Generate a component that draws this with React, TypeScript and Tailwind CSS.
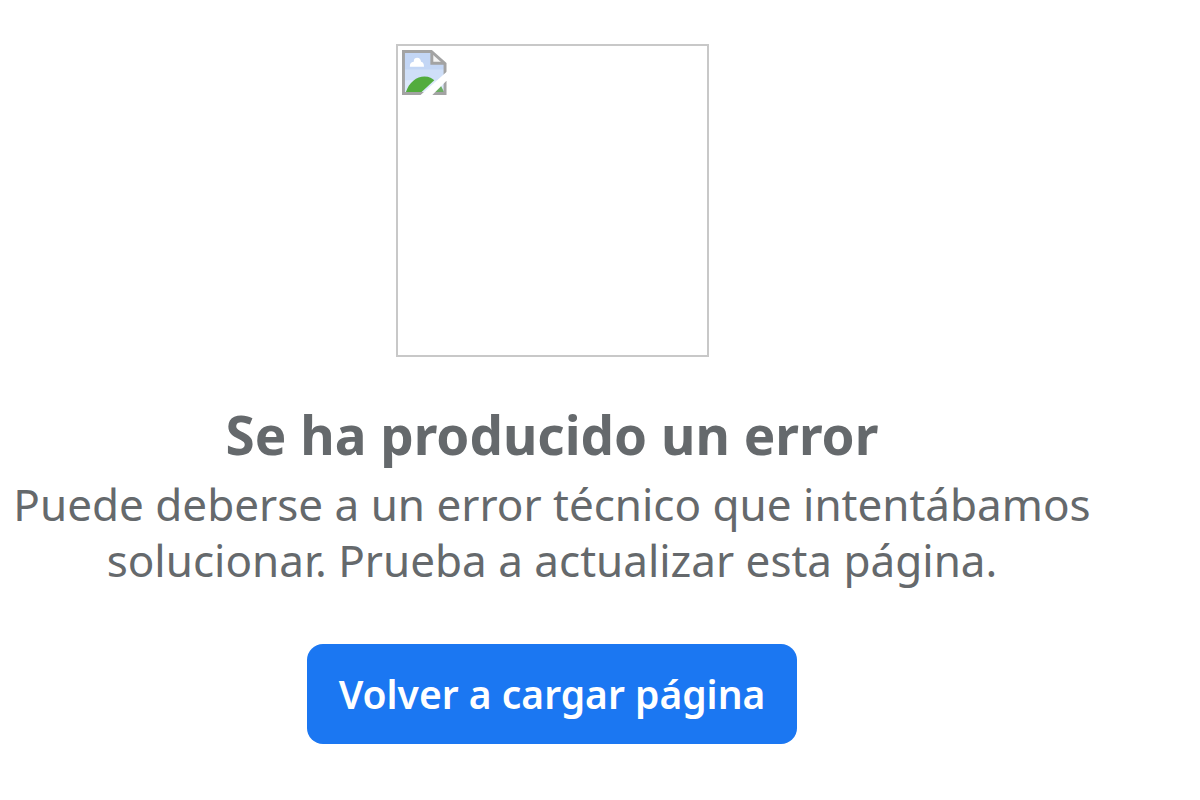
function BrokenImageIcon() {
  return (
    <svg className="h-[45px] w-[45px]" viewBox="0 0 46 46" fill="none" aria-hidden="true">
      <path d="M1.5 1.5H30L44 14V44.5H1.5Z" fill="#c3d6f5" />
      <path d="M3 20H43V43H3Z" fill="#cfdff8" />
      <path d="M3 31H43V43H3Z" fill="#dce8fb" />
      <path d="M8 17C8 14 9 12.500 12 12C12 9 13.500 8 15.500 8C18 8 19 9.500 19.500 12C21.500 12.500 22.500 14 22.500 17Z" fill="#fff" />
      <path d="M4 43C7 33 15 27 23 27C28 27 31 29 33 31L20 43Z" fill="#52ac3d" />
      <path d="M31 43L39 35L43 43Z" fill="#6cae63" />
      <path d="M30 1.500V14H44Z" fill="#f4f4f4" />
      <path d="M1.500 1.500H30L44 14V44.500H1.500Z" stroke="#a3a3a3" strokeWidth="3" />
      <path d="M30.500 2V13.500H43" stroke="#a3a3a3" strokeWidth="3" />
      <path d="M46 22V31L31 46H19Z" fill="#fff" />
    </svg>
  )
}

export default function App() {
  const handleReload = () => {
    window.location.reload()
  }

  return (
    <main className="min-h-screen bg-white pt-11 pr-24 pb-14 font-['Noto_Sans',sans-serif] text-[#65696c]">
      <div className="flex flex-col items-center text-center">
        <div className="h-[313px] w-[313px] border-2 border-[#c8c8c8] p-1">
          <BrokenImageIcon />
        </div>

        <h1 className="mt-11 text-[53px] leading-[67px] font-bold">Se ha producido un error</h1>
        <p className="mt-2 max-w-[1100px] text-[44px] leading-14">
          Puede deberse a un error técnico que intentábamos solucionar. Prueba a actualizar esta página.
        </p>

        <button
          type="button"
          onClick={handleReload}
          className="mt-14 h-[100px] cursor-pointer rounded-2xl bg-[#1b77f2] px-8 text-[39px] font-semibold text-white"
        >
          Volver a cargar página
        </button>
      </div>
    </main>
  )
}
